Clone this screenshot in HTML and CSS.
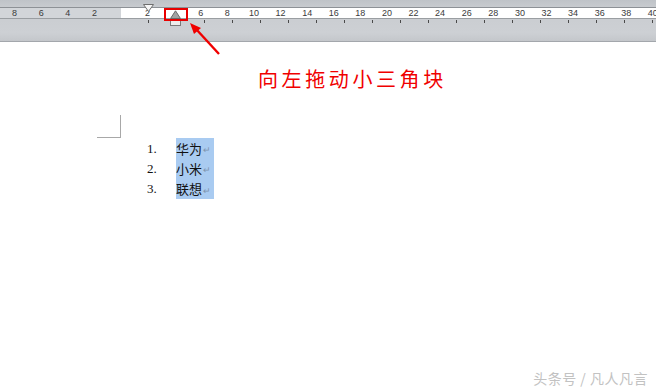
FILE: index.html
```html
<html>
  <head>
    <title>ruler indent</title>
    <link rel="stylesheet" href="styles.css">
  </head>
  <body>
    <div class="page">
      <header class="rulerbar">
        <div class="ruler">
          <div class="ruler-left">
            <span>8</span><span>6</span><span>4</span><span>2</span>
          </div>
          <div class="ruler-right">
            <span>2</span><span></span><span>6</span><span>8</span><span>10</span>
            <span>12</span><span>14</span><span>16</span><span>18</span><span>20</span>
            <span>22</span><span>24</span><span>26</span><span>28</span><span>30</span>
            <span>32</span><span>34</span><span>36</span><span>38</span><span>40</span>
          </div>
        </div>
        <div class="tabs">
          <i></i><i></i><i></i><i></i><i></i><i></i><i></i><i></i><i></i><i></i>
          <i></i><i></i><i></i><i></i><i></i><i></i><i></i><i></i><i></i>
        </div>
      </header>

      <main class="doc">
        <p class="note">向左拖动小三角块</p>
        <div class="corner"></div>
        <div class="list">
          <div class="nums">
            <span>1.</span><span>2.</span><span>3.</span>
          </div>
          <div class="items">
            <span>华为<em>↵</em></span>
            <span>小米<em>↵</em></span>
            <span>联想<em>↵</em></span>
          </div>
        </div>
        <p class="watermark">头条号 / 凡人凡言</p>
      </main>

      <!-- indent markers sit over the ruler -->
      <svg class="first-indent" viewBox="0 0 11 8">
        <path d="M0.5 0.5 L10.5 0.5 L5.5 7.5 Z" fill="#f6f6f6" stroke="#6e6e6e" />
      </svg>
      <svg class="hang-indent" viewBox="0 0 11 17">
        <path d="M5.5 0.8 L10.5 8.5 L0.5 8.5 Z" fill="#a2a2a2" stroke="#6a6a6a" />
        <rect x="0.5" y="9.5" width="10" height="6" fill="#ececec" stroke="#7a7a7a" />
      </svg>
      <div class="callout"></div>
      <svg class="arrow" viewBox="0 0 656 80">
        <line x1="219" y1="54" x2="196" y2="29" stroke="#f00000" stroke-width="2.4" />
        <path d="M190 23 L201 28 L194 34 Z" fill="#f00000" />
      </svg>
    </div>
  </body>
</html>
```

FILE: styles.css
```css
body { margin: 0; padding: 0; background: #fff; }
.page {
  position: relative;
  width: 656px;
  height: 392px;
  overflow: hidden;
  display: flex;
  flex-direction: column;
}
.rulerbar {
  flex-shrink: 0;
  background: linear-gradient(#bfc3c8, #c9ccd0 20%, #cdd0d4 80%, #c4c7cb);
  border-bottom: 1px solid #a3a7ac;
  padding-top: 7px;
  height: 34px;
}
.ruler {
  display: flex;
  height: 10px;
  border-top: 1px solid #8d9196;
  border-bottom: 1px solid #9a9ea2;
  font: 9px/10px "Liberation Sans", sans-serif;
  color: #3a3a3a;
  overflow: hidden;
}
.ruler span {
  flex-shrink: 0;
  width: 26.6px;
  text-align: center;
}
.ruler-left {
  width: 121px;
  flex-shrink: 0;
  display: flex;
  justify-content: flex-end;
  padding-right: 13.3px;
  box-sizing: border-box;
  background: #d2d5d9;
}
.ruler-right {
  flex: 1;
  display: flex;
  padding-left: 13.3px;
  background: #fff;
}
.tabs {
  display: flex;
  margin: 1px 0 0 148px;
}
.tabs i {
  flex-shrink: 0;
  width: 1px;
  height: 3px;
  margin-right: 27px;
  background: #4a4a4a;
}

.doc {
  flex: 1;
  display: flex;
  flex-direction: column;
  font-family: "Noto Sans CJK SC", sans-serif;
}
.note {
  margin: 25px 0 0 258px;
  font-size: 20px;
  line-height: 24px;
  letter-spacing: 3.6px;
  color: #f00000;
}
.corner {
  margin: 24px 0 0 97px;
  width: 23px;
  height: 22px;
  border-right: 1px solid #a8a8a8;
  border-bottom: 1px solid #a8a8a8;
}
.list {
  display: flex;
  font-size: 13px;
}
.list span {
  display: flex;
  align-items: center;
  height: 20.3px;
  line-height: 1;
}
.nums {
  display: flex;
  flex-direction: column;
  margin-left: 147px;
  width: 29px;
  font-family: "Liberation Serif", serif;
  font-size: 13px;
  color: #111;
}
.items {
  display: flex;
  flex-direction: column;
  width: 38px;
  background: #a9cbf1;
  color: #111;
}
.items em {
  font-style: normal;
  font-size: 9px;
  color: #7f93ad;
  margin: 3px 0 0 1px;
}
.watermark {
  margin: auto 8px 6px 0;
  align-self: flex-end;
  font-size: 14px;
  line-height: 16px;
  letter-spacing: 0.5px;
  color: #c2c2c2;
  text-shadow: 0 0 1px #fff;
}

.first-indent {
  position: absolute;
  left: 143px;
  top: 4px;
  width: 11px;
  height: 8px;
}
.hang-indent {
  position: absolute;
  left: 170px;
  top: 10px;
  width: 11px;
  height: 17px;
}
.callout {
  position: absolute;
  left: 164px;
  top: 8px;
  width: 24px;
  height: 13px;
  border: 2px solid #e80000;
  box-sizing: border-box;
}
.arrow {
  position: absolute;
  left: 0;
  top: 0;
  width: 656px;
  height: 80px;
}
```
